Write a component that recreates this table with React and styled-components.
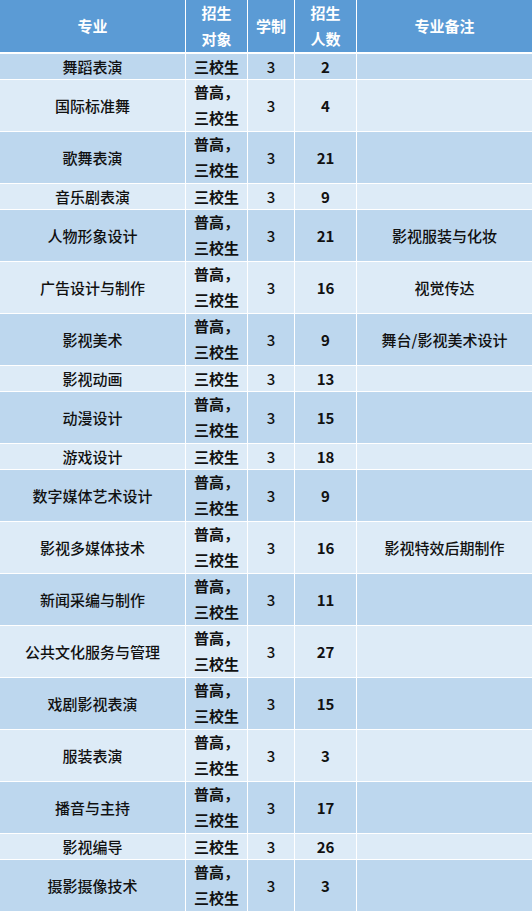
import React from 'react';
import styled, { createGlobalStyle } from 'styled-components';

const GlobalStyle = createGlobalStyle`
    html, body {
        margin: 0;
        padding: 0;
        background: #ffffff;
    }
    body {
        font-family: "Noto Sans CJK SC", "Noto Sans", sans-serif;
    }
`;

const Table = styled.div`
    width: 532px;
    display: grid;
    grid-template-columns: 185px 61px 46px 61px 1fr;
    column-gap: 1px;
    row-gap: 1px;
    background-color: #ffffff;
`;

const HeadCell = styled.div`
    height: 52px;
    margin-bottom: 1px;
    background-color: #5b9bd5;
    color: #ffffff;
    font-size: 15px;
    font-weight: 700;
    line-height: 26px;
    display: flex;
    align-items: center;
    justify-content: center;
    text-align: center;
`;

const Cell = styled.div`
    box-sizing: border-box;
    height: ${props => (props.$tall ? '51px' : '25px')};
    padding-bottom: 1px;
    background-color: ${props => (props.$dark ? '#bdd7ee' : '#ddebf7')};
    color: #111111;
    font-size: 15px;
    font-weight: ${props => (props.$bold ? 700 : 500)};
    line-height: 25px;
    display: flex;
    align-items: center;
    justify-content: center;
    white-space: nowrap;
`;

const Lines = styled.div`
    text-align: left;
    line-height: 26px;
`;

const rows = [
    ['舞蹈表演', false, '2', ''],
    ['国际标准舞', true, '4', ''],
    ['歌舞表演', true, '21', ''],
    ['音乐剧表演', false, '9', ''],
    ['人物形象设计', true, '21', '影视服装与化妆'],
    ['广告设计与制作', true, '16', '视觉传达'],
    ['影视美术', true, '9', '舞台/影视美术设计'],
    ['影视动画', false, '13', ''],
    ['动漫设计', true, '15', ''],
    ['游戏设计', false, '18', ''],
    ['数字媒体艺术设计', true, '9', ''],
    ['影视多媒体技术', true, '16', '影视特效后期制作'],
    ['新闻采编与制作', true, '11', ''],
    ['公共文化服务与管理', true, '27', ''],
    ['戏剧影视表演', true, '15', ''],
    ['服装表演', true, '3', ''],
    ['播音与主持', true, '17', ''],
    ['影视编导', false, '26', ''],
    ['摄影摄像技术', true, '3', ''],
];

function App() {
    return (
        <>
            <GlobalStyle />
            <Table>
                <HeadCell>专业</HeadCell>
                <HeadCell>招生<br />对象</HeadCell>
                <HeadCell>学制</HeadCell>
                <HeadCell>招生<br />人数</HeadCell>
                <HeadCell>专业备注</HeadCell>
                {rows.map(([name, tall, count, note], i) => {
                    const dark = i % 2 === 0;
                    return (
                        <React.Fragment key={name}>
                            <Cell $tall={tall} $dark={dark}>{name}</Cell>
                            <Cell $tall={tall} $dark={dark} $bold>
                                {tall ? <Lines>普高，<br />三校生</Lines> : '三校生'}
                            </Cell>
                            <Cell $tall={tall} $dark={dark}>3</Cell>
                            <Cell $tall={tall} $dark={dark} $bold>{count}</Cell>
                            <Cell $tall={tall} $dark={dark}>{note}</Cell>
                        </React.Fragment>
                    );
                })}
            </Table>
        </>
    );
}

export default App;
